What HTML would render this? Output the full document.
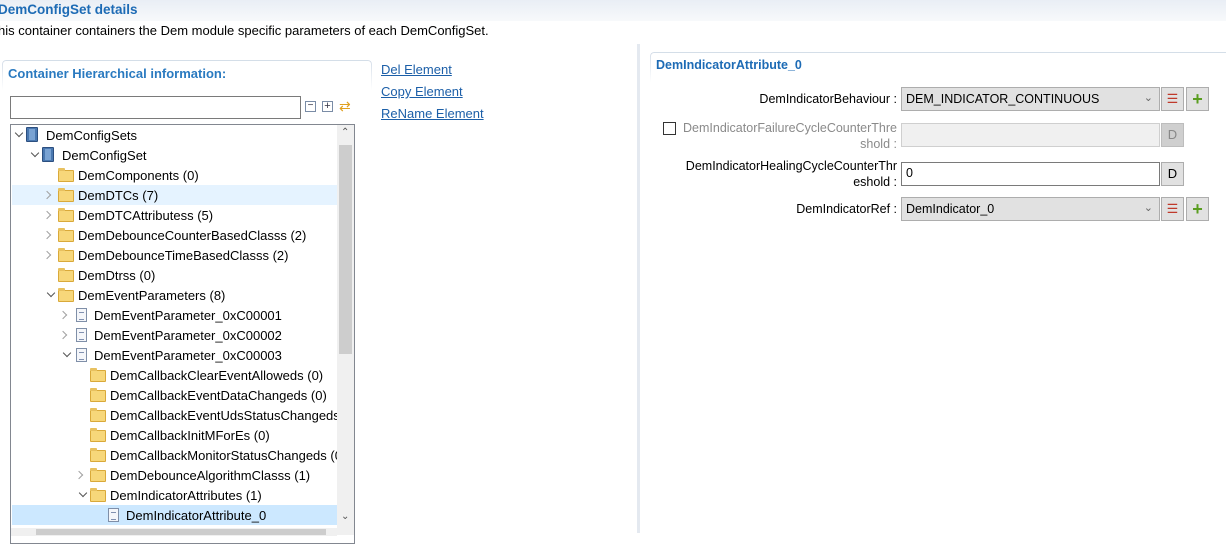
<!DOCTYPE html>
<html><head><meta charset="utf-8"><style>
*{margin:0;padding:0;box-sizing:border-box}
body{width:1226px;height:533px;overflow:hidden;background:#fff;font-family:"Liberation Sans",sans-serif;font-size:13px;color:#000;position:relative}
.a{position:absolute;white-space:nowrap}
.row{position:absolute;left:1px;width:325px;height:20px}
.row.h{background:#e5f3ff}.row.s{background:#cce8ff}
.row span{position:absolute;top:3px}
.arr{position:absolute;top:7px;width:6px;height:6px;border-right:1.3px solid #555;border-bottom:1.3px solid #555}
.arr.d{transform:rotate(45deg);top:5px;margin-left:1px}
.arr.r{transform:rotate(-45deg);border-color:#a0a0a0}
.fo{position:absolute;top:5px;width:16px;height:12px;background:#f7d77a;border:1px solid #d9a93a;border-radius:1px}
.fo:before{content:"";position:absolute;left:-1px;top:-3px;width:7px;height:3px;background:#e8c160;border-radius:1px 1px 0 0}
.doc{position:absolute;top:3px;width:11px;height:14px;border:1px solid #7f8fa8;background:#f4f6fa}
.doc:after{content:"";position:absolute;left:2px;top:3px;width:5px;height:6px;border-top:1px solid #8090b0;border-bottom:1px solid #8090b0}
.bk{position:absolute;top:2px;width:12px;height:15px;background:#4a78b0;border:1px solid #2c4f80;border-radius:1px}
.bk:after{content:"";position:absolute;left:2px;top:1px;width:6px;height:11px;background:#7aa3d3}
a{color:#1c5fa8;text-decoration:underline}
.r{font-size:12.5px}
.lbl{position:absolute;text-align:right;right:329px;white-space:nowrap;font-size:12.5px}
.cb{position:absolute;left:901px;width:259px;height:24px;background:#e1e1e1;border:1px solid #adadad;padding:4px 4px;font-size:12.5px}
.btn{position:absolute;width:23px;height:24px;background:#e1e1e1;border:1px solid #adadad;text-align:center;line-height:22px}
</style></head><body>
<div class="a" style="left:0;top:0;width:1226px;height:21px;background:linear-gradient(#e9eef5,#f7f9fb)"></div>
<div class="a" style="left:-2px;top:2px;font-weight:bold;color:#1d6bb5;font-size:13.5px">DemConfigSet details</div>
<div class="a" style="left:-2px;top:23px">his container containers the Dem module specific parameters of each DemConfigSet.</div>

<div class="a" style="left:2px;top:60px;width:370px;height:30px;border:1px solid #d4dde8;border-bottom:none;border-radius:4px 4px 0 0;-webkit-mask:linear-gradient(#000,transparent)"></div>
<div class="a" style="left:8px;top:66px;font-weight:bold;color:#2a7ac0;font-size:13px">Container Hierarchical information:</div>
<div class="a" style="left:10px;top:96px;width:291px;height:23px;border:1px solid #7a7a7a"></div>
<div class="a" style="left:305px;top:101px;width:11px;height:11px;border:1px solid #7a8ca6;font-size:10px;line-height:8px;text-align:center;color:#334">−</div>
<div class="a" style="left:322px;top:101px;width:11px;height:11px;border:1px solid #7a8ca6;font-size:11px;line-height:9px;text-align:center;color:#334">+</div>
<div class="a" style="left:339px;top:98px;color:#e0a020;font-size:14px">⇄</div>

<div class="a" style="left:10px;top:124px;width:345px;height:420px;border:1px solid #828790;overflow:hidden">
<div class="a" style="left:326px;top:0;width:17px;height:410px;background:#f0f0f0"></div>
<div class="a" style="left:328px;top:20px;width:13px;height:209px;background:#cdcdcd"></div>
<div class="a" style="left:330px;top:2px;font-size:10px;color:#555">⌃</div>
<div class="a" style="left:330px;top:386px;font-size:10px;color:#555">⌄</div>
<div class="a" style="left:0;top:403px;width:326px;height:8px;background:#f0f0f0"></div>
<div class="a" style="left:25px;top:404px;width:290px;height:6px;background:#cdcdcd"></div>

<div class="row" style="top:0"><i class="arr d" style="left:3px"></i><i class="bk" style="left:14px"></i><span style="left:34px">DemConfigSets</span></div>
<div class="row" style="top:20px"><i class="arr d" style="left:19px"></i><i class="bk" style="left:30px"></i><span style="left:50px">DemConfigSet</span></div>
<div class="row" style="top:40px"><i class="fo" style="left:46px"></i><span style="left:66px">DemComponents (0)</span></div>
<div class="row h" style="top:60px"><i class="arr r" style="left:32px"></i><i class="fo" style="left:46px"></i><span style="left:66px">DemDTCs (7)</span></div>
<div class="row" style="top:80px"><i class="arr r" style="left:32px"></i><i class="fo" style="left:46px"></i><span style="left:66px">DemDTCAttributess (5)</span></div>
<div class="row" style="top:100px"><i class="arr r" style="left:32px"></i><i class="fo" style="left:46px"></i><span style="left:66px">DemDebounceCounterBasedClasss (2)</span></div>
<div class="row" style="top:120px"><i class="arr r" style="left:32px"></i><i class="fo" style="left:46px"></i><span style="left:66px">DemDebounceTimeBasedClasss (2)</span></div>
<div class="row" style="top:140px"><i class="fo" style="left:46px"></i><span style="left:66px">DemDtrss (0)</span></div>
<div class="row" style="top:160px"><i class="arr d" style="left:35px"></i><i class="fo" style="left:46px"></i><span style="left:66px">DemEventParameters (8)</span></div>
<div class="row" style="top:180px"><i class="arr r" style="left:48px"></i><i class="doc" style="left:64px"></i><span style="left:82px">DemEventParameter_0xC00001</span></div>
<div class="row" style="top:200px"><i class="arr r" style="left:48px"></i><i class="doc" style="left:64px"></i><span style="left:82px">DemEventParameter_0xC00002</span></div>
<div class="row" style="top:220px"><i class="arr d" style="left:51px"></i><i class="doc" style="left:64px"></i><span style="left:82px">DemEventParameter_0xC00003</span></div>
<div class="row" style="top:240px;overflow:hidden"><i class="fo" style="left:78px"></i><span style="left:98px">DemCallbackClearEventAlloweds (0)</span></div>
<div class="row" style="top:260px;overflow:hidden"><i class="fo" style="left:78px"></i><span style="left:98px">DemCallbackEventDataChangeds (0)</span></div>
<div class="row" style="top:280px;overflow:hidden"><i class="fo" style="left:78px"></i><span style="left:98px">DemCallbackEventUdsStatusChangeds (0)</span></div>
<div class="row" style="top:300px;overflow:hidden"><i class="fo" style="left:78px"></i><span style="left:98px">DemCallbackInitMForEs (0)</span></div>
<div class="row" style="top:320px;overflow:hidden"><i class="fo" style="left:78px"></i><span style="left:98px">DemCallbackMonitorStatusChangeds (0)</span></div>
<div class="row" style="top:340px"><i class="arr r" style="left:64px"></i><i class="fo" style="left:78px"></i><span style="left:98px">DemDebounceAlgorithmClasss (1)</span></div>
<div class="row" style="top:360px"><i class="arr d" style="left:67px"></i><i class="fo" style="left:78px"></i><span style="left:98px">DemIndicatorAttributes (1)</span></div>
<div class="row s" style="top:380px"><i class="doc" style="left:96px"></i><span style="left:114px">DemIndicatorAttribute_0</span></div>
</div>

<a class="a" style="left:381px;top:62px">Del Element</a>
<a class="a" style="left:381px;top:84px">Copy Element</a>
<a class="a" style="left:381px;top:106px">ReName Element</a>

<div class="a" style="left:637px;top:44px;width:3px;height:489px;background:#e4e9f0"></div>
<div class="a" style="left:650px;top:52px;width:590px;height:30px;border-top:1px solid #d4dde8;border-left:1px solid #d4dde8;border-radius:4px 0 0 0;-webkit-mask:linear-gradient(#000,transparent)"></div>
<div class="a" style="left:656px;top:58px;font-weight:bold;color:#1d6bb5;font-size:12.5px">DemIndicatorAttribute_0</div>

<div class="lbl" style="top:92px">DemIndicatorBehaviour :</div>
<div class="cb" style="top:87px">DEM_INDICATOR_CONTINUOUS<span style="position:absolute;right:6px;top:3px;color:#666;font-size:11px">⌄</span></div>
<div class="btn" style="left:1161px;top:87px;color:#c0392b;font-size:13px">☰</div>
<div class="btn" style="left:1186px;top:87px;color:#5a9e20;font-weight:bold;font-size:18px">+</div>

<div class="a" style="left:663px;top:122px;width:13px;height:13px;border:1px solid #333"></div>
<div class="lbl" style="top:120px;color:#8a8a8a;line-height:16px">DemIndicatorFailureCycleCounterThre<br>shold :</div>
<div class="a" style="left:901px;top:123px;width:259px;height:24px;background:#f0f0f0;border:1px solid #cfcfcf"></div>
<div class="btn" style="left:1161px;top:123px;background:#cfcfcf;border-color:#bdbdbd;color:#888">D</div>

<div class="lbl" style="top:158px;line-height:16px">DemIndicatorHealingCycleCounterThr<br>eshold :</div>
<div class="a r" style="left:901px;top:162px;width:259px;height:24px;border:1px solid #7a7a7a;padding:3px 4px">0</div>
<div class="btn" style="left:1161px;top:162px">D</div>

<div class="lbl" style="top:202px">DemIndicatorRef :</div>
<div class="cb" style="top:197px">DemIndicator_0<span style="position:absolute;right:6px;top:3px;color:#666;font-size:11px">⌄</span></div>
<div class="btn" style="left:1161px;top:197px;color:#c0392b;font-size:13px">☰</div>
<div class="btn" style="left:1186px;top:197px;color:#5a9e20;font-weight:bold;font-size:18px">+</div>
</body></html>
